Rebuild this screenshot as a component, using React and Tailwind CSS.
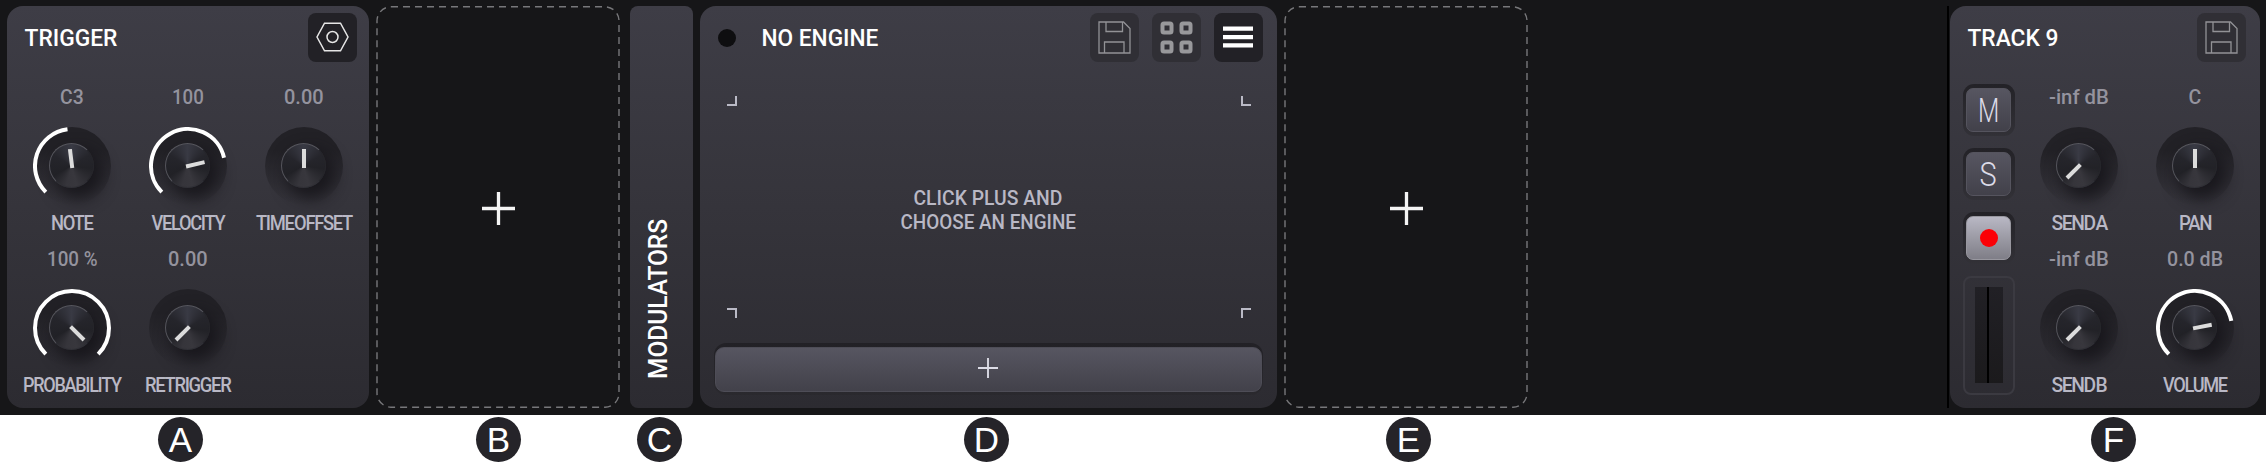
import { useLayoutEffect, useRef, useState } from "react";

// Condenses a line of text horizontally so that it fills the given width.
function Fit({ w, className = "", children }) {
  const ref = useRef(null);
  const [scale, setScale] = useState(1);
  useLayoutEffect(() => {
    setScale(w / ref.current.offsetWidth);
  }, [w]);
  return (
    <span className="flex justify-center" style={{ width: w }}>
      <span
        ref={ref}
        className={"inline-block shrink-0 whitespace-nowrap " + className}
        style={{ transform: `scaleX(${scale})` }}
      >
        {children}
      </span>
    </span>
  );
}

const polar = (deg, r) => {
  const a = (deg * Math.PI) / 180;
  return `${39 + r * Math.sin(a)} ${39 - r * Math.cos(a)}`;
};

function Knob({ angle, arc }) {
  return (
    <div className="relative h-[78px] w-[78px] rounded-full bg-linear-to-b from-[#222126] from-30% to-[#222126]/0 to-100%">
      <div className="absolute left-[16px] top-[16px] h-[45px] w-[45px] rounded-full border border-[#55555c] border-b-[#303036] border-r-[#26262b] bg-[conic-gradient(#393a44,#25252b_60deg,#222227_100deg,#38373d_165deg,#36353b_195deg,#212126_240deg,#25252b_300deg,#393a44)] shadow-[7px_9px_16px_2px_rgba(20,19,24,0.8)]" />
      <svg className="absolute inset-0" width="78" height="78" viewBox="0 0 78 78" fill="none">
        {arc && (
          <path
            d={`M${polar(-135, 37)}A37 37 0 ${angle > 45 ? 1 : 0} 1 ${polar(angle, 37)}`}
            stroke="#fff"
            strokeWidth="4"
          />
        )}
        <rect x="37" y="22" width="4" height="19" fill="#dcdcdc" transform={`rotate(${angle} 39 39)`} />
      </svg>
    </div>
  );
}

function Control({ value, vw, label, lw, angle, arc, tight = "tracking-[-1.5px] [word-spacing:-3px]" }) {
  return (
    <div className="flex h-[162px] w-[116px] flex-col items-center">
      <div className="flex h-[30px] items-center pt-px text-[21px] leading-[30px] font-medium text-[#94939e]">
        <Fit w={vw}>{value}</Fit>
      </div>
      <div className="mt-[16px]">
        <Knob angle={angle} arc={arc} />
      </div>
      <div className="mt-[2px] flex h-[30px] items-center pt-px text-[21px] leading-[30px] font-medium text-[#b9b8c5]">
        <Fit w={lw} className={tight}>{label}</Fit>
      </div>
    </div>
  );
}

function IconButton({ active, children }) {
  return (
    <div
      className={
        "flex h-[49px] w-[49px] items-center justify-center rounded-[8px] " +
        (active ? "bg-[#222126]" : "bg-[#302f35]")
      }
    >
      {children}
    </div>
  );
}

function SaveIcon() {
  return (
    <svg width="33" height="33" viewBox="0 0 33 33" fill="none" stroke="#929296" strokeWidth="1.3">
      <path d="M1 1H25.5L32 7.5V32H1Z" />
      <path d="M8 1V10.500H24.500V1M6.500 32V21H26V32" />
    </svg>
  );
}

function Plus({ size, color, width }) {
  return (
    <svg width={size} height={size} viewBox="0 0 32 32" stroke={color} strokeWidth={width}>
      <path d="M16 0V32M0 16H32" />
    </svg>
  );
}

function Slot() {
  return (
    <div className="relative flex h-[402px] w-[244px] items-center justify-center">
      <svg className="absolute inset-0" width="244" height="402" fill="none">
        <rect x="1" y="0.8" width="242" height="400.400" rx="14" stroke="#77777a" strokeWidth="1.4" strokeDasharray="7 5" />
      </svg>
      <div className="pt-[3px]">
        <Plus size={33} color="#f4f4f4" width={3.2} />
      </div>
    </div>
  );
}

function PadButton({ lit, children }) {
  return (
    <div className="flex h-[52px] w-[52px] justify-center rounded-[11px] bg-linear-to-b from-[#232227] to-[#323137] pt-[4px]">
      <div
        className={
          "flex h-[44.500px] w-[44.500px] items-center justify-center rounded-[7px] border bg-linear-to-b " +
          (lit
            ? "border-[#98979f] from-[#b9b8c4] to-[#7f7e87]"
            : "border-[#55545e] from-[#575661] to-[#42414a]")
        }
      >
        {children}
      </div>
    </div>
  );
}

const PANEL = "h-[402px] shrink-0 bg-linear-to-b from-[#3e3d46] via-[#35343b] to-[#2c2b31]";
const TITLE = "text-[24px] leading-[30px] font-medium text-white";

function Badge({ pad, children }) {
  return (
    <div className={pad}>
      <div className="flex h-[45px] w-[45px] items-center justify-center rounded-full bg-[#252429] font-['Liberation_Sans',Arial,sans-serif] text-[35px] leading-[45px] text-white">
        {children}
      </div>
    </div>
  );
}

function Corner({ side }) {
  return <div className={"h-[10px] w-[10px] border-[#babac6] " + side} />;
}

export default function App() {
  return (
    <div className="h-[465px] w-[2266px] overflow-hidden bg-white font-[Roboto,sans-serif]">
      <div className="flex h-[415px] bg-[#161618] pl-[7px] pt-[6px]">
        <section className={PANEL + " w-[362px] rounded-[16px]"}>
          <header className="flex h-[62px] items-start justify-between pl-[17px] pr-[12.500px] pt-[6.500px]">
            <div className={"mt-[10px] " + TITLE}><Fit w={93}>TRIGGER</Fit></div>
            <IconButton active>
              <svg width="33" height="30" viewBox="0 0 33 30" fill="none" stroke="#e6e6e6" strokeWidth="1.5">
                <path d="M8.500 1.200H24.500L32 15L24.500 28.800H8.500L1 15Z" />
                <circle cx="16.500" cy="15" r="5.500" />
              </svg>
            </IconButton>
          </header>
          <div className="grid w-[355px] grid-cols-3 pl-[7px] pt-[13px]">
            <Control value="C3" vw={24} label="NOTE" lw={42} angle={-7} arc />
            <Control value="100" vw={32} label="VELOCITY" lw={73} angle={77} arc />
            <Control value="0.00" vw={40} label="TIME OFFSET" lw={96} angle={0} />
            <Control value="100 %" vw={51} label="PROBABILITY" lw={98} angle={135} arc />
            <Control value="0.00" vw={40} label="RETRIGGER" lw={85} angle={-135} />
          </div>
        </section>

        <div className="ml-[7px]"><Slot /></div>

        <section className={PANEL + " ml-[10px] flex w-[63px] items-end rounded-[8px] pb-[31px] pl-[12.500px]"}>
          <div className="flex h-[157px] w-[30px] items-center justify-center">
            <div className="-rotate-90 text-[26px] leading-[30px] font-medium text-white">
              <Fit w={160}>MODULATORS</Fit>
            </div>
          </div>
        </section>

        <section className={PANEL + " ml-[7px] w-[577px] rounded-[16px]"}>
          <header className="flex h-[62px] items-start pl-[18px] pr-[14.500px] pt-[6.500px]">
            <div className="mt-[16px] h-[18px] w-[18px] rounded-full bg-[#0e0e10]" />
            <div className={"ml-[25px] mt-[10px] grow " + TITLE}><Fit w={117}>NO ENGINE</Fit></div>
            <div className="flex gap-[13px]">
              <IconButton><SaveIcon /></IconButton>
              <IconButton>
                <svg width="33" height="33" viewBox="0 0 33 33" fill="none" stroke="#98989b" strokeWidth="4">
                  <rect x="2.500" y="2.500" width="9" height="9" rx="1.500" />
                  <rect x="21.500" y="2.500" width="9" height="9" rx="1.500" />
                  <rect x="2.500" y="21.500" width="9" height="9" rx="1.500" />
                  <rect x="21.500" y="21.500" width="9" height="9" rx="1.500" />
                </svg>
              </IconButton>
              <IconButton active>
                <svg width="30" height="22" viewBox="0 0 30 22" fill="#fff">
                  <path d="M0 0.500H30V4.700H0ZM0 9H30V13.200H0ZM0 17.300H30V21.500H0Z" />
                </svg>
              </IconButton>
            </div>
          </header>
          <div className="mx-auto mt-[28px] flex h-[222px] w-[524px] flex-col justify-between">
            <div className="flex justify-between">
              <Corner side="border-b-2 border-r-2" />
              <Corner side="border-b-2 border-l-2" />
            </div>
            <div className="flex flex-col items-center pt-[5px] pr-[1px] text-[20.500px] leading-[24px] font-medium text-[#b9b8c5]">
              <Fit w={149}>CLICK PLUS AND</Fit>
              <Fit w={176}>CHOOSE AN ENGINE</Fit>
            </div>
            <div className="flex justify-between">
              <Corner side="border-t-2 border-r-2" />
              <Corner side="border-t-2 border-l-2" />
            </div>
          </div>
          <div className="mx-auto mt-[25px] h-[52px] w-[549px] rounded-[12px] bg-linear-to-b from-[#222126] to-[#2a292e] px-px pt-[4px]">
            <div className="flex h-[44.500px] items-center justify-center rounded-[9px] border border-[#4e4d57] bg-linear-to-b from-[#575661] to-[#42414a] pr-[1px] pb-[3px]">
              <Plus size={20} color="#dcdce6" width={3} />
            </div>
          </div>
        </section>

        <div className="ml-[7px]"><Slot /></div>
        <div className="ml-[419px] h-[402px] w-[2px] bg-black" />

        <section className={PANEL + " ml-[0.500px] w-[310.500px] rounded-[16px]"}>
          <header className="flex h-[62px] items-start justify-between pl-[18px] pr-[14.500px] pt-[6.500px]">
            <div className={"mt-[10px] " + TITLE}><Fit w={91}>TRACK 9</Fit></div>
            <IconButton><SaveIcon /></IconButton>
          </header>
          <div className="flex pl-[13px]">
            <div className="flex w-[52px] flex-col gap-[12px] pt-[15.500px]">
              <PadButton><div className="text-[34px] leading-[44px] font-light text-[#dcdbe8]"><Fit w={21}>M</Fit></div></PadButton>
              <PadButton><div className="text-[34px] leading-[44px] font-light text-[#dcdbe8]"><Fit w={17}>S</Fit></div></PadButton>
              <PadButton lit><div className="h-[18px] w-[18px] rounded-full bg-[#fb0006]" /></PadButton>
              <div className="flex h-[119px] w-[52px] justify-center rounded-[8px] border-2 border-[#3b3a41] pt-[9px]">
                <div className="flex h-[96px] w-[28px] justify-center bg-linear-to-b from-[#212025] to-[#1b1a1c]">
                  <div className="-ml-[2px] h-full w-[2px] bg-black" />
                </div>
              </div>
            </div>
            <div className="ml-[6.500px] grid w-[232px] grid-cols-2 pt-[13px]">
              <Control value="-inf dB" vw={60} label="SEND A" lw={55} angle={-135} />
              <Control value="C" vw={13} label="PAN" lw={32} angle={0} />
              <Control value="-inf dB" vw={60} label="SEND B" lw={55} angle={-135} />
              <Control value="0.0 dB" vw={56} label="VOLUME" lw={64} angle={79} arc />
            </div>
          </div>
        </section>
      </div>

      <div className="flex pt-[2px]">
        <Badge pad="ml-[158px]">A</Badge>
        <Badge pad="ml-[273px]">B</Badge>
        <Badge pad="ml-[116px]">C</Badge>
        <Badge pad="ml-[282px]">D</Badge>
        <Badge pad="ml-[377px]">E</Badge>
        <Badge pad="ml-[660px]">F</Badge>
      </div>
    </div>
  );
}
